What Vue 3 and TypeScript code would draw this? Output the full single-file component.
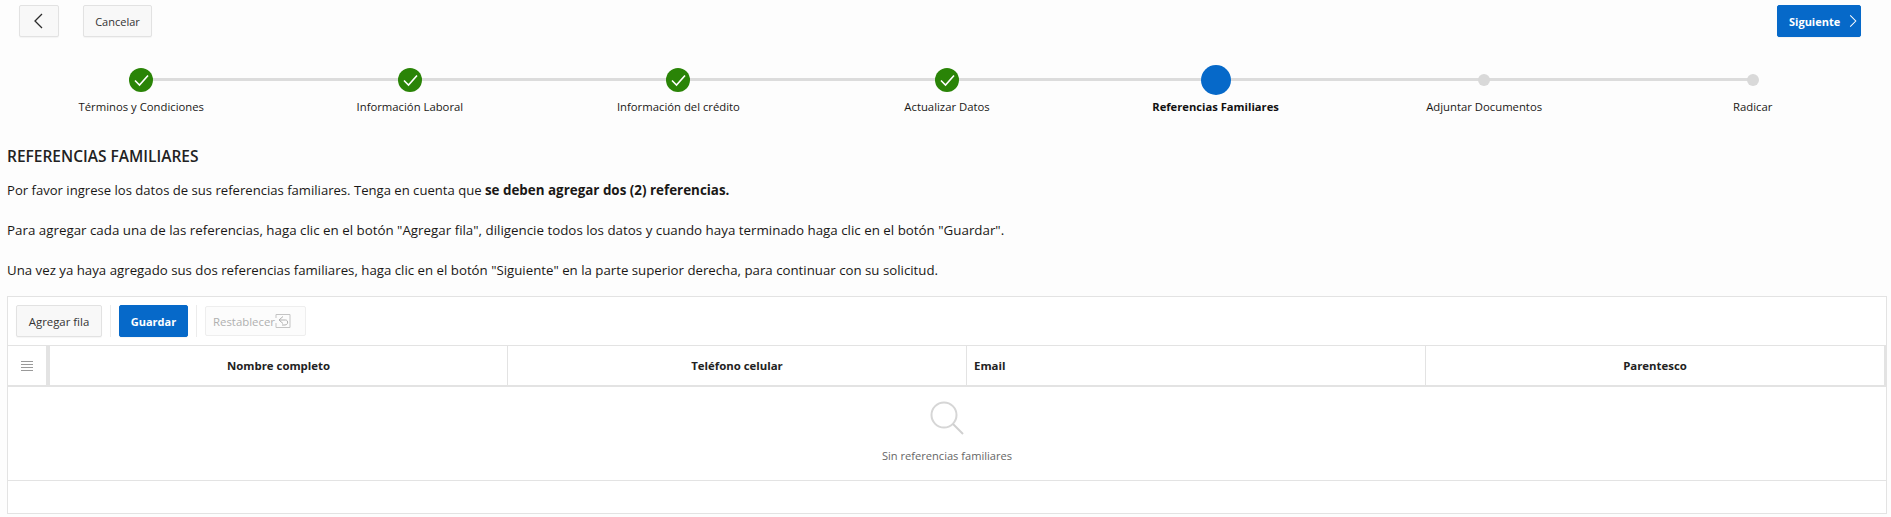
<script setup lang="ts">
interface Step { label: string; state: 'done' | 'current' | 'todo' }
const steps: Step[] = [
  { label: 'Términos y Condiciones', state: 'done' },
  { label: 'Información Laboral', state: 'done' },
  { label: 'Información del crédito', state: 'done' },
  { label: 'Actualizar Datos', state: 'done' },
  { label: 'Referencias Familiares', state: 'current' },
  { label: 'Adjuntar Documentos', state: 'todo' },
  { label: 'Radicar', state: 'todo' },
]
</script>

<template>
  <div class="page">
    <div class="topbar">
      <div class="left">
        <button class="btn back" aria-label="Atrás">
          <svg width="16" height="18" viewBox="0 0 16 18"><path d="M11 2 L4 9 L11 16" fill="none" stroke="#2b2b2b" stroke-width="1.3"/></svg>
        </button>
        <button class="btn cancel">Cancelar</button>
      </div>
      <button class="btn next">
        <span>Siguiente</span>
        <svg width="16" height="18" viewBox="0 0 16 18"><path d="M4 2 L11 9 L4 16" fill="none" stroke="#fff" stroke-width="1.3"/></svg>
      </button>
    </div>

    <ol class="train">
      <li v-for="s in steps" :key="s.label" class="step" :class="s.state">
        <div class="marker-row">
          <span class="marker">
            <svg v-if="s.state === 'done'" width="24" height="24" viewBox="0 0 24 24"><path d="M6 12.5 L10.5 17 L19 7.5" fill="none" stroke="#fff" stroke-width="1.6"/></svg>
          </span>
        </div>
        <span class="label">{{ s.label }}</span>
      </li>
    </ol>

    <section class="content">
      <h2 class="title">REFERENCIAS FAMILIARES</h2>
      <p class="p1">Por favor ingrese los datos de sus referencias familiares. Tenga en cuenta que <b>se deben agregar dos (2) referencias.</b></p>
      <p class="p2">Para agregar cada una de las referencias, haga clic en el botón "Agregar fila", diligencie todos los datos y cuando haya terminado haga clic en el botón "Guardar".</p>
      <p>Una vez ya haya agregado sus dos referencias familiares, haga clic en el botón "Siguiente" en la parte superior derecha, para continuar con su solicitud.</p>
    </section>

    <section class="grid">
      <div class="toolbar">
        <button class="btn add">Agregar fila</button>
        <span class="sep"></span>
        <button class="btn save">Guardar</button>
        <span class="sep"></span>
        <button class="btn reset" disabled>
          <span>Restablecer</span>
          <svg width="16" height="16" viewBox="0 0 16 16"><path d="M1 5V1.5H15V14.5H1V10" fill="none" stroke="#c4c4c4"/><path d="M8 3.5 L4 7 L8 10.5 M4 7H10.5C13.5 7 13.5 12 10 12H7" fill="none" stroke="#b0b0b0"/></svg>
        </button>
      </div>
      <div class="head">
        <div class="hcell menu">
          <svg width="14" height="12" viewBox="0 0 14 12"><path d="M1 1.5H13M1 4.5H13M1 7.5H13M1 10.5H13" stroke="#9a9a9a" stroke-width="1"/></svg>
        </div>
        <div class="hcell">Nombre completo</div>
        <div class="hcell">Teléfono celular</div>
        <div class="hcell start">Email</div>
        <div class="hcell last">Parentesco</div>
      </div>
      <div class="empty">
        <svg width="36" height="36" viewBox="0 0 36 36"><circle cx="15" cy="15" r="12.5" fill="none" stroke="#d6d6d6" stroke-width="2"/><path d="M24 24 L34 34" stroke="#d0d0d0" stroke-width="2"/></svg>
        <span>Sin referencias familiares</span>
      </div>
      <div class="foot"></div>
    </section>
  </div>
</template>

<style>
html, body { background: #fff; }
</style>

<style scoped>
.page {
  width: 1891px;
  height: 517px;
  overflow: hidden;
  box-sizing: border-box;
  background: #fdfdfd;
  font-family: "Open Sans", "Noto Sans", sans-serif;
  color: #1a1816;
  display: flex;
  flex-direction: column;
  padding: 5px 4px 0 7px;
}
.topbar { display: flex; justify-content: space-between; align-items: flex-start; padding: 0 26px 0 12px; height: 33px; }
.left { display: flex; gap: 24px; }
.btn {
  font-family: inherit;
  box-sizing: border-box;
  border-radius: 2px;
  font-size: 11px;
  border: 1px solid #e2e2e2;
  background: #f8f8f8;
  color: #333;
  height: 32px;
  display: inline-flex;
  align-items: center;
  justify-content: center;
  padding: 0;
  box-shadow: 0 1px 1px rgba(0,0,0,.04);
}
.back { width: 40px; }
.cancel { width: 69px; }
.next { width: 84px; background: #0669c9; border-color: #0669c9; color: #fff; font-weight: 700; font-size: 11px; gap: 7px; justify-content: flex-start; padding-left: 11px; }
.train { list-style: none; display: grid; grid-template-columns: repeat(7, 1fr); margin: 27px 0 0; padding: 0; }
.step { display: flex; flex-direction: column; align-items: center; position: relative; }
.marker-row { height: 30px; display: flex; align-items: center; justify-content: center; width: 100%; position: relative; }
.step::before {
  content: ""; position: absolute; top: 13px; left: 0; right: 0; height: 3px; background: #dcdcdc;
}
.step:first-child::before { left: 50%; }
.step:last-child::before { right: 50%; }
.marker { position: relative; border-radius: 50%; display: block; }
.done .marker { width: 24px; height: 24px; background: #2a8407; }
.current .marker { width: 30px; height: 30px; background: #0669c9; }
.todo .marker { width: 12px; height: 12px; background: #d9d9d9; }
.marker svg { display: block; }
.label { font-size: 11.3px; margin-top: 4px; line-height: 16px; }
.current .label { font-weight: 700; font-size: 11.2px; color: #111; }
.content { margin-top: 31px; }
.title { font-size: 15.5px; font-weight: 600; margin: 0 0 14px; line-height: 20px; color: #222; }
.content p { font-size: 13.25px; line-height: 20px; margin: 0 0 20px; }
.content p.p1 { font-size: 13.1px; }
.content p.p1 b { font-size: 13.4px; }
.content p.p2 { font-size: 13.35px; }
.grid { border: 1px solid #e3e3e3; background: #fff; height: 218px; box-sizing: border-box; display: flex; flex-direction: column; margin-top: -4px; }
.toolbar { height: 49px; display: flex; align-items: center; gap: 8px; padding: 0 8px; border-bottom: 1px solid #e3e3e3; box-sizing: border-box; }
.sep { width: 1px; height: 32px; background: #ececec; }
.add { width: 86px; height: 32px; font-size: 11.4px; }
.save { width: 69px; background: #0669c9; border-color: #0669c9; color: #fff; font-weight: 700; }
.reset { width: 101px; height: 30px; color: #b0b0b0; background: #fcfcfc; border-color: #eee; box-shadow: none; font-size: 11.4px; justify-content: flex-start; padding-left: 7px; }
.head { display: grid; grid-template-columns: 42px 458px 459px 459px 1fr; height: 41px; border-bottom: 2px solid #e3e3e3; box-sizing: border-box; border-right: 2px solid #e3e3e3; }
.hcell { display: flex; align-items: center; justify-content: center; font-size: 11.4px; font-weight: 700; border-right: 1px solid #e3e3e3; color: #222; }
.hcell.menu { border-right: 4px solid #e3e3e3; }
.hcell.start { justify-content: flex-start; padding-left: 7px; }
.hcell.last { border-right: none; }
.empty { height: 94px; display: flex; flex-direction: column; align-items: center; justify-content: flex-start; padding-top: 13px; gap: 12px; font-size: 11.1px; color: #666; border-bottom: 1px solid #e3e3e3; box-sizing: border-box; }
.foot { flex: 1; }
</style>
